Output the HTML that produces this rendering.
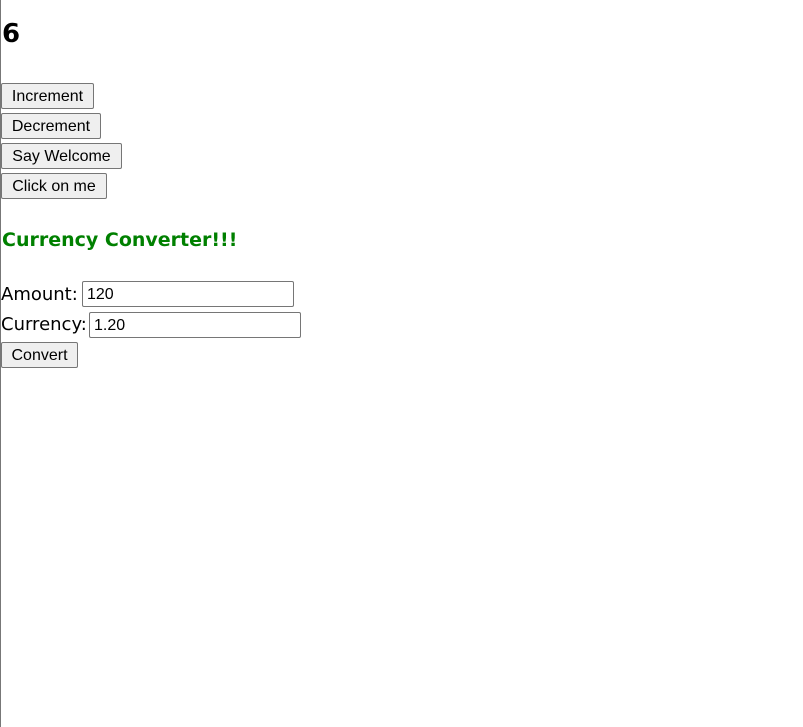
<!DOCTYPE html>
<html><head><style>
html,body{margin:0;padding:0;background:#fff;width:803px;height:727px;overflow:hidden}
body{position:relative;font-family:"Liberation Sans",sans-serif}
.bl{position:absolute;left:0;top:0;width:1px;height:727px;background:#777}
.a{position:absolute;white-space:nowrap}
button{position:absolute;height:26px;font:16px "Liberation Sans",sans-serif;background:#efefef;border:1px solid #767676;border-radius:2px;padding:1px 9px 0;color:#000;box-sizing:border-box}
input{position:absolute;height:26px;box-sizing:border-box;border:1px solid #767676;border-radius:2px;font:16px "Liberation Sans",sans-serif;padding:1px 4px 0}
</style></head><body>
<div class="bl"></div>
<div class="a" style="left:2px;top:19px;font:bold 26px 'DejaVu Sans',sans-serif">6</div>
<button style="left:1px;top:83px;width:93px">Increment</button>
<button style="left:1px;top:113px;width:100px">Decrement</button>
<button style="left:1px;top:143px;width:121px">Say Welcome</button>
<button style="left:1px;top:173px;width:106px">Click on me</button>
<div class="a" style="left:2px;top:229px;font:bold 19px 'DejaVu Sans',sans-serif;color:#008000">Currency Converter!!!</div>
<div class="a" style="left:1px;top:284px;font:18px 'DejaVu Sans',sans-serif">Amount:</div>
<input style="left:82px;top:281px;width:212px" value="120">
<div class="a" style="left:1px;top:314px;font:18px 'DejaVu Sans',sans-serif">Currency:</div>
<input style="left:89px;top:312px;width:212px" value="1.20">
<button style="left:1px;top:342px;width:77px">Convert</button>
</body></html>
